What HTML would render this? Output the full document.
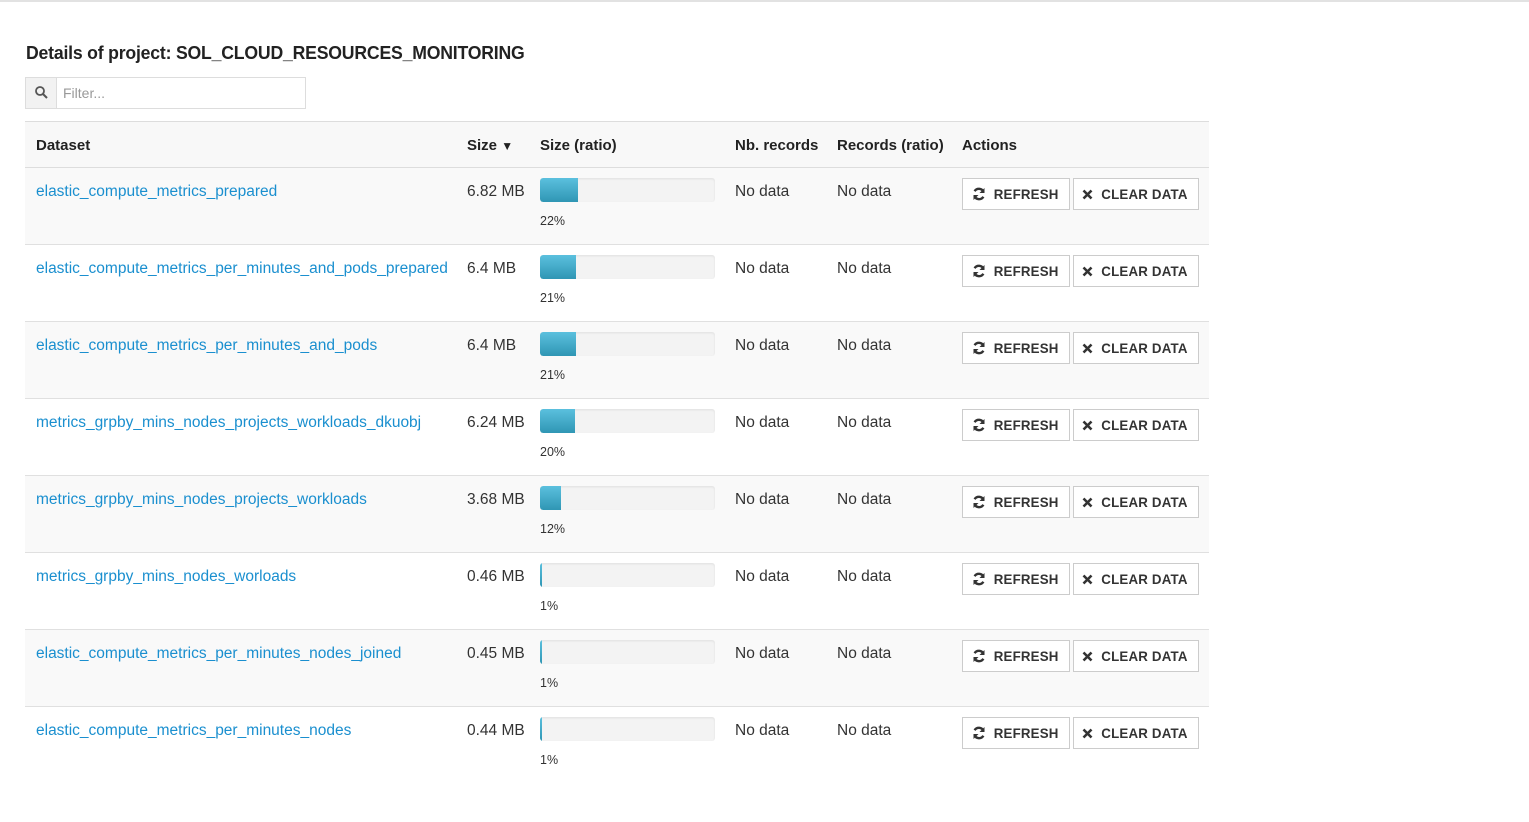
<!DOCTYPE html>
<html><head><meta charset="utf-8">
<style>
*{box-sizing:border-box;margin:0;padding:0}
body{width:1529px;height:822px;background:#fff;font-family:"Liberation Sans",sans-serif;color:#333;position:relative;overflow:hidden}
.topline{position:absolute;left:0;top:0;width:1529px;height:2px;background:#e2e2e2}
h1{position:absolute;left:26px;top:43px;font-size:18px;font-weight:bold;color:#222;letter-spacing:-0.2px;transform:scaleX(.98);transform-origin:left;white-space:nowrap}
.filter{position:absolute;left:25px;top:77px;width:281px;height:32px;border:1px solid #ddd}
.filter .ic{position:absolute;left:0;top:0;width:31px;height:30px;background:#f2f2f2;border-right:1px solid #ddd}
.filter span{position:absolute;left:37px;top:7px;font-size:14px;color:#999}
.tbl{position:absolute;left:25px;top:121px;width:1184px}
.hdr{height:47px;background:#f8f8f8;border-top:1px solid #ddd;border-bottom:1px solid #ddd;position:relative;font-weight:bold;font-size:15px;color:#222}
.hdr div,.row div.t{position:absolute;top:15px;white-space:nowrap}
.row{height:77px;position:relative;border-bottom:1px solid #e0e0e0;font-size:15.5px}
.row:nth-child(odd){background:#f9f9f9}
.row:last-child{border-bottom:none}
.row div.t{top:15px}
a{color:#1a8fcf;text-decoration:none}
.bar{position:absolute;left:515px;top:10px;width:175px;height:24px;background:#f3f3f3;border-radius:3px;box-shadow:inset 0 1px 2px rgba(0,0,0,.08);overflow:hidden}
.bar i{display:block;height:100%;background:linear-gradient(#5bc0de,#2f96b4);border-radius:3px 0 0 3px}
.pct{position:absolute;left:515px;top:46px;font-size:12.5px;color:#333}
.btn{position:absolute;top:10px;height:32px;border:1px solid #ccc;background:#fff;font-size:14px;font-weight:bold;color:#333;display:flex;align-items:center;justify-content:center;gap:6px;letter-spacing:.2px}
.b1{left:937px;width:108px}.b2{left:1048px;width:126px}
.btn span{transform:scaleX(.95)}
</style></head><body>
<div class="topline"></div>
<h1>Details of project: SOL_CLOUD_RESOURCES_MONITORING</h1>
<div class="filter"><div class="ic"><svg width="31" height="30" viewBox="0 0 31 30"><circle cx="14" cy="13" r="4" fill="none" stroke="#555" stroke-width="1.8"/><line x1="17" y1="16" x2="21" y2="20" stroke="#555" stroke-width="2"/></svg></div><span>Filter...</span></div>
<div class="tbl">
<div class="hdr"><div style="left:11px">Dataset</div><div style="left:442px">Size <span style="font-size:12px">▼</span></div><div style="left:515px">Size (ratio)</div><div style="left:710px">Nb. records</div><div style="left:812px">Records (ratio)</div><div style="left:937px">Actions</div></div>
<div id="rows"></div>
</div>
<script>
var d=[["elastic_compute_metrics_prepared","6.82 MB",22,38],["elastic_compute_metrics_per_minutes_and_pods_prepared","6.4 MB",21,36],["elastic_compute_metrics_per_minutes_and_pods","6.4 MB",21,36],["metrics_grpby_mins_nodes_projects_workloads_dkuobj","6.24 MB",20,35],["metrics_grpby_mins_nodes_projects_workloads","3.68 MB",12,21],["metrics_grpby_mins_nodes_worloads","0.46 MB",1,2],["elastic_compute_metrics_per_minutes_nodes_joined","0.45 MB",1,2],["elastic_compute_metrics_per_minutes_nodes","0.44 MB",1,2]];
var ref='<svg width="14" height="14" viewBox="0 0 14 14"><path d="M11.5 5A5 5 0 0 0 2.6 4.2" fill="none" stroke="#333" stroke-width="2.4"/><path d="M12.5 1v5h-5z" fill="#333"/><path d="M2.5 9A5 5 0 0 0 11.4 9.8" fill="none" stroke="#333" stroke-width="2.4"/><path d="M1.5 13V8h5z" fill="#333"/></svg>';
var x='<svg width="11" height="11" viewBox="0 0 11 11"><path d="M1.5 1.5l8 8M9.5 1.5l-8 8" stroke="#333" stroke-width="2.6"/></svg>';
var h='';d.forEach(function(r){h+='<div class="row"><div class="t" style="left:11px"><a>'+r[0]+'</a></div><div class="t" style="left:442px">'+r[1]+'</div><div class="bar"><i style="width:'+r[3]+'px"></i></div><div class="pct">'+r[2]+'%</div><div class="t" style="left:710px">No data</div><div class="t" style="left:812px">No data</div><div class="btn b1">'+ref+'<span>REFRESH</span></div><div class="btn b2">'+x+'<span>CLEAR DATA</span></div></div>'});
document.getElementById('rows').innerHTML=h;
</script>
</body></html>
